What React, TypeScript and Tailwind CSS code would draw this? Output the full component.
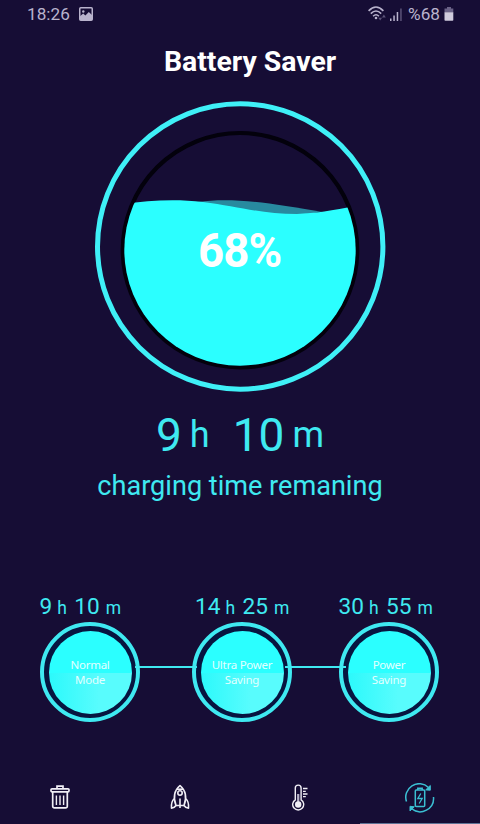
type Mode = {
  id: string;
  hours: string;
  minutes: string;
  label: string[];
};

const modes: Mode[] = [
  { id: "normal", hours: "9", minutes: "10", label: ["Normal", "Mode"] },
  { id: "ultra", hours: "14", minutes: "25", label: ["Ultra Power", "Saving"] },
  { id: "power", hours: "30", minutes: "55", label: ["Power", "Saving"] },
];

const StatusBar = () => {
  return (
    <div className="flex h-[30px] items-center justify-between pl-[27px] pr-[26px] text-[17.2px] text-[#b9b3cd]">
      <div className="flex items-center gap-[9px]">
        <span>18:26</span>
        <svg className="-mt-[1px]" width="14" height="14" viewBox="0 0 14 14">
          <rect x="0.75" y="0.75" width="12.5" height="12.5" rx="1" fill="none" stroke="currentColor" strokeWidth="1.5" />
          <circle cx="4.3" cy="4.5" r="1.2" fill="currentColor" />
          <path d="M1 9.2 4.2 6.6l2.2 2L9.8 5 13 8v5H1Z" fill="currentColor" />
        </svg>
      </div>

      <div className="flex items-center">
        <svg className="-mt-[2px]" width="36" height="16" viewBox="0 0 36 16">
          {/* wifi */}
          <g fill="none" stroke="currentColor" strokeWidth="1.6">
            <path d="M0.6 4.9Q8 -2.8 15.4 4.9" />
            <path d="M2.8 7.6Q8 2.3 13.2 7.6" />
            <path d="M5.1 10.2Q8 7.3 10.9 10.2" />
          </g>
          <circle cx="8" cy="12" r="1.3" fill="currentColor" />
          <path d="M10.3 11.8h3.8l-1.9 2.8ZM14 11.4h3.8L15.9 8.6Z" fill="#5b5378" />
          {/* signal */}
          <g fill="currentColor">
            <rect x="22" y="12.5" width="1.5" height="2.5" />
            <rect x="25.3" y="9.5" width="1.5" height="5.5" />
            <rect x="28.7" y="6" width="1.5" height="9" />
          </g>
          <rect x="32.2" y="2.5" width="1.5" height="12.5" fill="#5b5378" />
        </svg>
        <span className="ml-[4px]">%68</span>
        <svg className="-mt-[2px] ml-[4px]" width="10" height="14" viewBox="0 0 10 14">
          <path d="M3 0h4v1.5h2.3v4H0.5v-4H3Z" fill="#6a6287" />
          <path d="M0.5 5.3h8.8v7.7a.8.8 0 0 1-.8.8H1.3a.8.8 0 0 1-.8-.8Z" fill="#d0cbdd" />
        </svg>
      </div>
    </div>
  );
};

const BatteryGauge = () => {
  return (
    <div className="relative h-[292px] w-[292px]">
      <svg width="292" height="292" viewBox="94 100 292 292">
        <defs>
          <clipPath id="gauge">
            <circle cx="240" cy="250" r="115.7" />
          </clipPath>
        </defs>
        <circle cx="240.2" cy="246.5" r="142.7" fill="none" stroke="#3ff0f7" strokeWidth="5" />
        <circle cx="240" cy="250.2" r="117.2" fill="none" stroke="#03010c" strokeWidth="4.2" />
        <g clipPath="url(#gauge)">
          <path d="M198 202C232 197 270 203 322 212L290 216L240 210Z" fill="#288a9f" />
          <path
            d="M120 204.5C145 200.5 175 198.5 203 202C238 206.5 262 214 297 214C315 213.5 335 210.5 360 205V370H120Z"
            fill="#2bffff"
          />
        </g>
      </svg>
      <span className="absolute left-[104px] top-[123px] origin-left scale-x-95 text-[48px] font-bold leading-[56px] tracking-[-1px] text-white">
        68%
      </span>
    </div>
  );
};

const ModeButton = ({ mode }: { mode: Mode }) => {
  return (
    <button className="relative grid h-[100px] w-[100px] shrink-0 place-items-center rounded-full border-4 border-[#3fe9f1] bg-[#071540]">
      <span className="flex h-[83px] w-[83px] flex-col items-center justify-center whitespace-nowrap rounded-full bg-[linear-gradient(#2bffff_50%,transparent_50%),linear-gradient(90deg,#2cf9fb,#58fcfd_60%)] font-['Noto_Sans',sans-serif] text-[11.5px] leading-[15px] tracking-[-0.25px] text-[#e2ffff]">
        {mode.label.map((line) => (
          <span key={line}>{line}</span>
        ))}
      </span>
    </button>
  );
};

const TrashIcon = () => (
  <svg width="20" height="24" viewBox="0 0 20 24" fill="none" stroke="#f1eff6" strokeWidth="1.7">
    <path d="M7 3.5V1.2h6v2.3" />
    <rect x="1" y="3.8" width="18" height="3" rx="1" />
    <path d="M2.7 7v14.2a1.7 1.7 0 0 0 1.7 1.7h11.2a1.7 1.7 0 0 0 1.7-1.7V7" />
    <path d="M6.4 10.5v9.5M10 10.5v9.5M13.6 10.5v9.5" strokeWidth="1.4" />
  </svg>
);

const RocketIcon = () => (
  <svg width="20" height="26" viewBox="0 0 20 26" fill="none" stroke="#f1eff6" strokeWidth="1.6" strokeLinejoin="round">
    <path d="M6 21.5C3.6 15 3.5 7 10 1.5c6.5 5.5 6.4 13.5 4 20Z" />
    <path d="M7 5.2h6" />
    <circle cx="10" cy="9" r="2.2" />
    <path d="M4.5 14.5C2 16.5 1 18.5 1.5 24.3c1.8 0 3.2-1 4.5-2.8M15.5 14.5C18 16.5 19 18.5 18.5 24.3c-1.8 0-3.2-1-4.5-2.8" />
    <path d="M10 14.5v9.5" />
  </svg>
);

const ThermometerIcon = () => (
  <svg width="16" height="27" viewBox="0 0 16 27" fill="none" stroke="#f1eff6" strokeWidth="1.4">
    <path d="M3.3 15.8V4a2.9 2.9 0 0 1 5.8 0v11.8a5.5 5.5 0 1 1-5.8 0Z" />
    <path d="M6.2 10v9" stroke="#b8b3c8" strokeWidth="2.2" />
    <circle cx="6.2" cy="20.5" r="3.2" fill="#f1eff6" stroke="none" />
    <path d="M11 4.5h4.5M11 7.3h2.8M11 10h4.5M11 12.7h2.8" strokeWidth="1.3" />
  </svg>
);

const ChargeIcon = () => (
  <svg width="30" height="30" viewBox="0 0 30 30" fill="none" stroke="#3bbfd3" strokeWidth="1.5">
    <path d="M1.5 18.5A13.4 13.4 0 0 1 23.5 4.5" />
    <path d="M28.5 14A13.4 13.4 0 0 1 6.5 25.5" />
    <path d="M25.3 2.5v4.7l-4.6-.3Z M5 28v-4.7l4.3.5Z" fill="#3bbfd3" strokeWidth="1" />
    <path d="M12.8 7V5.2h4.4V7" />
    <rect x="10.3" y="7" width="9.4" height="16.5" rx="1" />
    <path d="M15.8 10.5l-3 5h4.4l-3 5" strokeWidth="1.3" />
  </svg>
);

const App = () => {
  return (
    <div className="flex h-[824px] w-[480px] flex-col overflow-hidden bg-[#160d35] font-[Roboto,sans-serif]">
      <StatusBar />

      <h1 className="flex h-[70px] items-start justify-center pl-[20px] pt-[15px] text-[28.4px] font-bold leading-[33px] text-white">
        Battery Saver
      </h1>

      <div className="flex justify-center">
        <BatteryGauge />
      </div>

      {/* remaining time */}
      <div className="mt-[16px] flex h-[54px] items-center justify-center text-[#3fe9f1]">
        <span className="text-[46px] leading-[54px]">9</span>
        <span className="-mt-px ml-[8px] text-[36px] leading-[54px]">h</span>
        <span className="ml-[23px] text-[46px] leading-[54px]">10</span>
        <span className="-mt-px ml-[8px] text-[36px] leading-[54px]">m</span>
      </div>
      <p className="mt-[8px] text-center text-[27.1px] leading-[32px] text-[#3fe9f1]">
        charging time remaning
      </p>

      <div className="mt-[92px] flex h-[26px] pl-[39.5px] text-[#3fe9f1]">
        {modes.map((mode) => (
          <div key={mode.id} className="flex w-[155.5px] shrink-0 items-baseline gap-[6px] leading-[26px] last:-ml-[12px]">
            <span className="text-[22.6px]">{mode.hours}</span>
            <span className="-ml-[1px] text-[17.5px]">h</span>
            <span className="ml-[1.5px] text-[22.6px]">{mode.minutes}</span>
            <span className="text-[17.5px]">m</span>
          </div>
        ))}
      </div>

      <div className="mt-px flex h-[102px] items-center pl-[40px]">
        <ModeButton mode={modes[0]} />
        <span className="z-10 -mx-[5px] -mt-[11px] h-[2px] w-[62px] bg-[#3fe9f1]" />
        <ModeButton mode={modes[1]} />
        <span className="z-10 -mx-[7px] -mt-[11px] h-[2px] w-[61px] bg-[#3fe9f1]" />
        <ModeButton mode={modes[2]} />
      </div>

      {/* bottom tabs */}
      <nav className="mt-auto grid h-[54px] grid-cols-4">
        <button className="flex items-center justify-center">
          <TrashIcon />
        </button>
        <button className="flex items-center justify-center">
          <RocketIcon />
        </button>
        <button className="flex items-center justify-center">
          <ThermometerIcon />
        </button>
        <button className="flex items-center justify-center border-b border-[#5d7396] pt-[2px]">
          <ChargeIcon />
        </button>
      </nav>
    </div>
  );
};

export default App;
